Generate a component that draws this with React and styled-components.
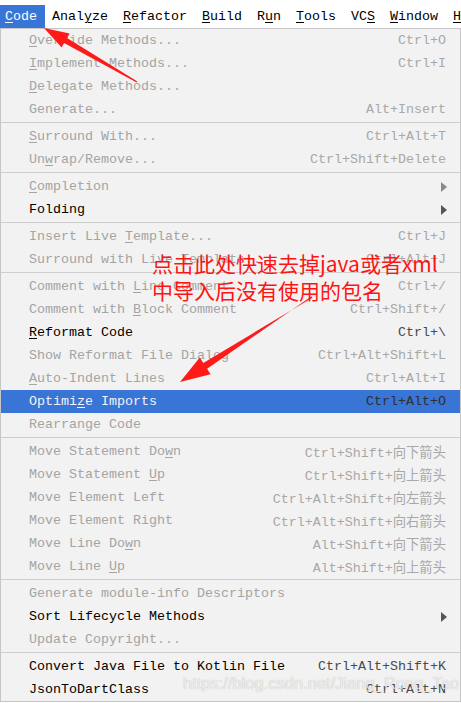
import React from "react";
import styled, { createGlobalStyle } from "styled-components";

const GlobalStyle = createGlobalStyle`
  body {
    margin: 0;
    background: #ffffff;
  }
`;

const mono = `"Liberation Mono", "Noto Sans CJK SC", monospace`;

// 전체 화면
const Page = styled.div`
  position: relative;
  width: 461px;
  height: 703px;
  overflow: hidden;
  font-family: ${mono};
  font-size: 13.33px;
`;

// 상단 메뉴바
const MenuBar = styled.div`
  display: flex;
  gap: 2px;
  padding-top: 5px;
  background: #ffffff;
  white-space: nowrap;
`;

const BarItem = styled.div`
  height: 23px;
  line-height: 23px;
  padding: 0 8px 0 5px;
  color: ${(p) => (p.$open ? "#ffffff" : "#000000")};
  background: ${(p) => (p.$open ? "#3875d7" : "transparent")};
`;

// 드롭다운 패널
const Panel = styled.div`
  box-sizing: border-box;
  width: 461px;
  background: #f2f2f2;
  border: 1px solid #c6c6c6;
`;

const Row = styled.div`
  display: flex;
  align-items: center;
  justify-content: space-between;
  height: 23px;
  padding: 0 14px 0 28px;
  white-space: nowrap;
  background: ${(p) => (p.$active ? "#3875d7" : "transparent")};
`;

const Label = styled.span`
  color: ${(p) =>
    p.$active ? "#f4f4f4" : p.$enabled ? "#000000" : "#a4a4a4"};
`;

const Shortcut = styled.span`
  color: ${(p) =>
    p.$active ? "#2f2f2f" : p.$enabled ? "#4a4a4a" : "#a8a8a8"};
`;

const Mnemonic = styled.u`
  text-decoration: underline;
  text-underline-offset: 2px;
`;

const Chevron = styled.span`
  width: 0;
  height: 0;
  margin-right: -1px;
  border-top: 5px solid transparent;
  border-bottom: 5px solid transparent;
  border-left: 6px solid ${(p) => (p.$enabled ? "#555555" : "#8a8a8a")};
`;

const Separator = styled.div`
  height: 1px;
  margin: 1px 0 2px;
  background: #cdcdcd;
`;

// 빨간 주석
const Note = styled.div`
  position: absolute;
  left: 152px;
  top: 250px;
  font-family: "Noto Sans CJK SC", "Liberation Sans", sans-serif;
  font-size: 21px;
  line-height: 27px;
  color: #ff1414;
  white-space: nowrap;
`;

const Arrows = styled.svg`
  position: absolute;
  left: 0;
  top: 0;
  pointer-events: none;
`;

const Watermark = styled.div`
  position: absolute;
  left: 183px;
  top: 674px;
  font-family: "Liberation Sans", Arial, sans-serif;
  font-size: 16.5px;
  color: rgba(255, 255, 255, 0.75);
  text-shadow: 0 0 1px rgba(0, 0, 0, 0.3);
  white-space: nowrap;
`;

const barItems = [
  "_Code",
  "Anal_yze",
  "_Refactor",
  "_Build",
  "R_un",
  "_Tools",
  "VC_S",
  "_Window",
  "_Help",
];

const sections = [
  [
    { label: "_Override Methods...", keys: "Ctrl+O" },
    { label: "_Implement Methods...", keys: "Ctrl+I" },
    { label: "_Delegate Methods..." },
    { label: "Generate...", keys: "Alt+Insert" },
  ],
  [
    { label: "_Surround With...", keys: "Ctrl+Alt+T" },
    { label: "Un_wrap/Remove...", keys: "Ctrl+Shift+Delete" },
  ],
  [
    { label: "_Completion", sub: true },
    { label: "Folding", sub: true, enabled: true },
  ],
  [
    { label: "Insert Live _Template...", keys: "Ctrl+J" },
    { label: "Surround with Live Template...", keys: "Ctrl+Alt+J" },
  ],
  [
    { label: "Comment with _Line Comment", keys: "Ctrl+/" },
    { label: "Comment with _Block Comment", keys: "Ctrl+Shift+/" },
    { label: "_Reformat Code", keys: "Ctrl+\\", enabled: true },
    { label: "Show Reformat File Dialog", keys: "Ctrl+Alt+Shift+L" },
    { label: "_Auto-Indent Lines", keys: "Ctrl+Alt+I" },
    { label: "Optimi_ze Imports", keys: "Ctrl+Alt+O", active: true },
    { label: "Rearrange Code" },
  ],
  [
    { label: "Move Statement Do_wn", keys: "Ctrl+Shift+向下箭头" },
    { label: "Move Statement _Up", keys: "Ctrl+Shift+向上箭头" },
    { label: "Move Element Left", keys: "Ctrl+Alt+Shift+向左箭头" },
    { label: "Move Element Right", keys: "Ctrl+Alt+Shift+向右箭头" },
    { label: "Move Line Do_wn", keys: "Alt+Shift+向下箭头" },
    { label: "Move Line _Up", keys: "Alt+Shift+向上箭头" },
  ],
  [
    { label: "Generate module-info Descriptors" },
    { label: "Sort Lifecycle Methods", sub: true, enabled: true },
    { label: "Update Copyright..." },
  ],
  [
    {
      label: "Convert Java File to Kotlin File",
      keys: "Ctrl+Alt+Shift+K",
      enabled: true,
    },
    { label: "JsonToDartClass", keys: "Ctrl+Alt+N", enabled: true },
  ],
];

// "_" 뒤의 글자에 밑줄
const renderLabel = (text) => {
  const i = text.indexOf("_");
  if (i < 0) return text;
  return (
    <>
      {text.slice(0, i)}
      <Mnemonic>{text[i + 1]}</Mnemonic>
      {text.slice(i + 2)}
    </>
  );
};

const MenuRow = ({ item }) => (
  <Row $active={item.active}>
    <Label $enabled={item.enabled} $active={item.active}>
      {renderLabel(item.label)}
    </Label>
    {item.sub ? (
      <Chevron $enabled={item.enabled} />
    ) : (
      item.keys && (
        <Shortcut $enabled={item.enabled} $active={item.active}>
          {item.keys}
        </Shortcut>
      )
    )}
  </Row>
);

const App = () => {
  return (
    <Page>
      <GlobalStyle />
      <MenuBar>
        {barItems.map((name, i) => (
          <BarItem key={name} $open={i === 0}>
            {renderLabel(name)}
          </BarItem>
        ))}
      </MenuBar>
      <Panel>
        {sections.map((items, s) => (
          <React.Fragment key={s}>
            {s > 0 && <Separator />}
            {items.map((item) => (
              <MenuRow key={item.label} item={item} />
            ))}
          </React.Fragment>
        ))}
      </Panel>
      <Note>
        点击此处快速去掉java或者xml
        <br />
        中导入后没有使用的包名
      </Note>
      <Arrows width="461" height="703" viewBox="0 0 461 703">
        <polygon
          fill="#ff1a1a"
          points="44,28 69.6,33.6 67.1,37.9 137.4,81.4 136.6,82.6 64.1,43.1 61.6,47.4"
        />
        <polygon
          fill="#ff1a1a"
          points="180,382 199.8,357.4 203.3,362.9 312.4,297.7 311.6,296.3 207.1,368.7 210.6,374.2"
        />
      </Arrows>
      <Watermark>https://blog.csdn.net/Jiang_Rong_Tao</Watermark>
    </Page>
  );
};

export default App;
